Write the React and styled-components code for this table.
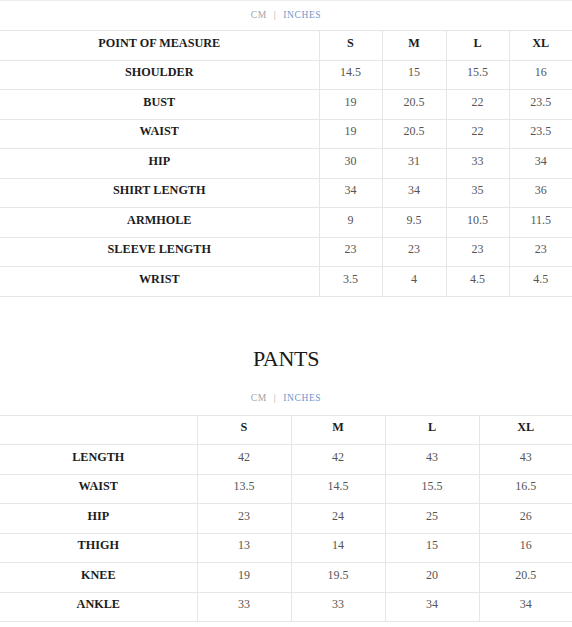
import React from "react";
import styled, { createGlobalStyle } from "styled-components";

const Global = createGlobalStyle`
  html, body { margin: 0; padding: 0; background: #fff; }
  body { font-family: "Liberation Serif", "Times New Roman", serif; }
`;

const Page = styled.div`
  width: 572px;
  border-top: 1px solid #ececec;
  font-family: "Liberation Serif", "Times New Roman", serif;
`;

const Units = styled.div`
  display: flex;
  justify-content: center;
  align-items: center;
  gap: 7px;
  box-sizing: border-box;
  height: ${(p) => p.$h}px;
  padding-top: ${(p) => p.$pt || 0}px;
  padding-bottom: ${(p) => p.$pb || 0}px;
  font-size: 9.5px;
  letter-spacing: 0.6px;
  color: #a3a3a3;
`;

const Unit = styled.span`
  color: ${(p) => (p.$active ? "#7195c9" : "#a3a3a3")};
`;

const Table = styled.table`
  width: 572px;
  border-collapse: collapse;
  table-layout: fixed;
  font-family: "Liberation Serif", "Times New Roman", serif;
  font-size: 12px;
`;

const Row = styled.tr`
  height: 29.5px;
`;

const Cell = styled.td`
  border-top: 1px solid #e6e6e6;
  border-bottom: 1px solid #e6e6e6;
  border-left: 1px solid #e6e6e6;
  text-align: center;
  padding: 0 0 4px;
  font-family: "Liberation Serif", "Times New Roman", serif;
  font-size: ${(p) => (p.$bold ? "12.2px" : "12px")};
  font-weight: ${(p) => (p.$bold ? 700 : 400)};
  color: ${(p) => (p.$bold ? "#1c1c1c" : "#555")};
  &:first-child { border-left: none; }
`;

const Title = styled.h2`
  margin: 0;
  padding: 49px 0 0;
  text-align: center;
  font-weight: 400;
  font-size: 22px;
  line-height: 26px;
  color: #1a1a1a;
  letter-spacing: -0.3px;
`;

const top = {
  cols: [319, 63, 64, 63, 63],
  head: ["POINT OF MEASURE", "S", "M", "L", "XL"],
  rows: [
    ["SHOULDER", "14.5", "15", "15.5", "16"],
    ["BUST", "19", "20.5", "22", "23.5"],
    ["WAIST", "19", "20.5", "22", "23.5"],
    ["HIP", "30", "31", "33", "34"],
    ["SHIRT LENGTH", "34", "34", "35", "36"],
    ["ARMHOLE", "9", "9.5", "10.5", "11.5"],
    ["SLEEVE LENGTH", "23", "23", "23", "23"],
    ["WRIST", "3.5", "4", "4.5", "4.5"],
  ],
};

const pants = {
  cols: [197, 94, 94, 94, 93],
  head: ["", "S", "M", "L", "XL"],
  rows: [
    ["LENGTH", "42", "42", "43", "43"],
    ["WAIST", "13.5", "14.5", "15.5", "16.5"],
    ["HIP", "23", "24", "25", "26"],
    ["THIGH", "13", "14", "15", "16"],
    ["KNEE", "19", "19.5", "20", "20.5"],
    ["ANKLE", "33", "33", "34", "34"],
  ],
};

function UnitToggle({ h, pt, pb }) {
  return (
    <Units $h={h} $pt={pt} $pb={pb}>
      <Unit>CM</Unit>
      <span>|</span>
      <Unit $active>INCHES</Unit>
    </Units>
  );
}

function SizeTable({ data }) {
  return (
    <Table>
      <colgroup>
        {data.cols.map((w, i) => (
          <col key={i} style={{ width: w }} />
        ))}
      </colgroup>
      <thead>
        <Row>
          {data.head.map((h, i) => (
            <Cell as="th" key={i} $bold>
              {h}
            </Cell>
          ))}
        </Row>
      </thead>
      <tbody>
        {data.rows.map((r, i) => (
          <Row key={i}>
            {r.map((c, j) => (
              <Cell key={j} $bold={j === 0}>
                {c}
              </Cell>
            ))}
          </Row>
        ))}
      </tbody>
    </Table>
  );
}

export default function App() {
  return (
    <Page>
      <Global />
      <UnitToggle h={29} pb={2} />
      <SizeTable data={top} />
      <Title>PANTS</Title>
      <UnitToggle h={43} pt={9} />
      <SizeTable data={pants} />
    </Page>
  );
}
